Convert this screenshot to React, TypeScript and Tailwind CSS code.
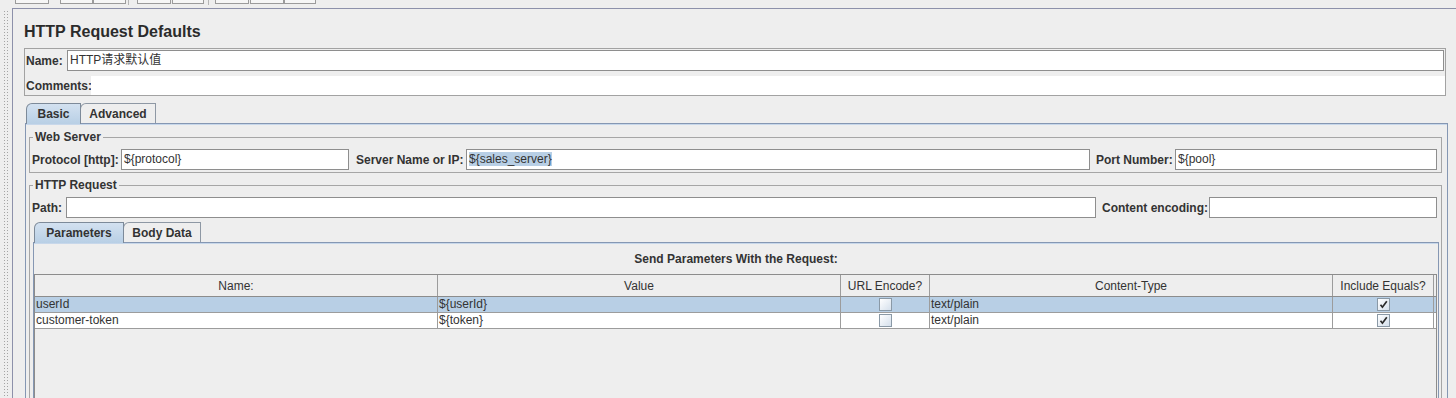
import React from "react";

function Field({
  className,
  children,
}: {
  className: string;
  children?: React.ReactNode;
}) {
  return (
    <div
      className={
        "h-[21px] border border-[#8e8e8e] bg-white pl-[2px] text-[12px] leading-[19px] text-[#333] whitespace-nowrap overflow-hidden " +
        className
      }
    >
      {children}
    </div>
  );
}

function Tab({
  label,
  selected,
  className,
}: {
  label: string;
  selected?: boolean;
  className: string;
}) {
  return (
    <div
      className={
        selected
          ? "relative z-10 -mb-px h-[21px] flex items-center justify-center rounded-tl-[6px] border-l border-t border-r border-[#7d8a99] bg-gradient-to-b from-[#d3e1f0] to-[#b8cfe5] text-[12px] font-bold text-[#333] " +
            className
          : "relative h-[20px] flex items-center justify-center rounded-tl-[6px] border-l border-t border-r border-[#8e98a4] bg-[#eeeeee] text-[12px] font-bold text-[#333] " +
            className
      }
    >
      {label}
    </div>
  );
}

function Check({ checked }: { checked?: boolean }) {
  return (
    <div className="w-[13px] h-[13px] border border-[#8a99a6] bg-gradient-to-br from-white to-[#d5e0ec] flex items-center justify-center">
      {checked && (
        <svg width="9" height="9" viewBox="0 0 9 9">
          <path
            d="M1.5 4.8 L3.4 7.2 L7.8 1.2"
            fill="none"
            stroke="#2a2a2a"
            strokeWidth="1.7"
          />
        </svg>
      )}
    </div>
  );
}

function Row({
  name,
  value,
  selected,
}: {
  name: string;
  value: string;
  selected?: boolean;
}) {
  return (
    <div
      className={
        selected
          ? "grid grid-cols-[403px_403px_89px_403px_101px] h-[16px] border-b border-[#9c9c9c] bg-[#b8cfe5] text-[12px] leading-[15px] text-[#333]"
          : "grid grid-cols-[403px_403px_89px_403px_101px] h-[16px] border-b border-[#9c9c9c] bg-white text-[12px] leading-[15px] text-[#333]"
      }
    >
      <div className="border-r border-[#9c9c9c] pl-[1px] whitespace-nowrap overflow-hidden">{name}</div>
      <div className="border-r border-[#9c9c9c] pl-[1px] whitespace-nowrap overflow-hidden">{value}</div>
      <div className="border-r border-[#9c9c9c] flex items-center justify-center">
        <Check />
      </div>
      <div className="border-r border-[#9c9c9c] pl-[1px]">text/plain</div>
      <div className="border-r border-[#9c9c9c] flex items-center justify-center">
        <Check checked />
      </div>
    </div>
  );
}

export default function App() {
  return (
    <div className="w-[1456px] h-[398px] overflow-hidden bg-[#eeeeee] font-['Liberation_Sans','Noto_Sans_CJK_SC',sans-serif] text-[#333] flex flex-col">
      {/* toolbar remnants */}
      <div className="h-[8px] shrink-0 flex items-start">
        <div className="ml-[15px] w-[34px] h-[4px] border-x border-b border-[#9b9b9b] bg-[#f6f6f6]" />
        <div className="ml-[11px] w-[33px] h-[4px] border-x border-b border-[#9b9b9b] bg-[#f6f6f6]" />
        <div className="w-[33px] h-[4px] border-x border-b border-[#9b9b9b] bg-[#f6f6f6]" />
        <div className="ml-[2px] w-px h-[5px] bg-[#b5b5b5]" />
        <div className="ml-[8px] w-[34px] h-[4px] border-x border-b border-[#9b9b9b] bg-[#f6f6f6]" />
        <div className="ml-[1px] w-[32px] h-[4px] border-x border-b border-[#9b9b9b] bg-[#f6f6f6]" />
        <div className="ml-[4px] w-px h-[5px] bg-[#b5b5b5]" />
        <div className="ml-[6px] w-[34px] h-[4px] border-x border-b border-[#9b9b9b] bg-[#f6f6f6]" />
        <div className="ml-[1px] w-[34px] h-[4px] border-x border-b border-[#9b9b9b] bg-[#f6f6f6]" />
        <div className="w-[32px] h-[4px] border-x border-b border-[#9b9b9b] bg-[#f6f6f6]" />
      </div>

      <div className="flex flex-1 min-h-0">
        {/* split pane divider */}
        <div className="w-[12px] shrink-0 flex pt-[2px]">
          <div className="ml-[3px] w-[7px] h-full bg-[radial-gradient(circle,#a4a4a4_0.7px,transparent_1px)] bg-[length:3px_3px]" />
        </div>

        {/* main panel */}
        <div className="flex-1 min-w-0 border-l border-t border-[#8d91aa] pl-[11px] pt-[13px] flex flex-col">
          <div className="text-[16px] leading-[19px] font-bold text-[#2b2b2b]">
            HTTP Request Defaults
          </div>

          {/* name / comments */}
          <div className="mt-[7px] mr-[10px] border border-[#a2a2a2] flex flex-col">
            <div className="mt-[1px] flex items-center h-[21px]">
              <span className="pl-[1px] w-[42px] shrink-0 font-bold text-[12px]">Name:</span>
              <Field className="flex-1 mr-[1px]">HTTP请求默认值</Field>
            </div>
            <div className="mt-[5px] flex items-center h-[19px]">
              <span className="pl-[1px] w-[66px] shrink-0 font-bold text-[12px]">Comments:</span>
              <div className="flex-1 h-full bg-white" />
            </div>
          </div>

          {/* Basic / Advanced tabs */}
          <div className="mt-[7px] ml-[2px] flex items-end h-[20px]">
            <Tab label="Basic" selected className="w-[55px]" />
            <Tab label="Advanced" className="-ml-px w-[76px]" />
          </div>
          <div className="ml-[1px] mr-[8px] flex-1 border border-[#8597b3] shadow-[inset_0_1px_0_#c7d7ea] pt-[6px] pl-[3px] pr-[5px]">
            {/* Web Server */}
            <fieldset className="border border-[#a6a6a6] pt-[5px] pb-[2px]">
              <legend className="ml-[3px] px-[2px] font-bold text-[12px] leading-[14px]">
                Web Server
              </legend>
              <div className="flex items-center h-[21px] pl-[2px] pr-[4px]">
                <span className="w-[89px] shrink-0 font-bold text-[12px] whitespace-nowrap">Protocol [http]:</span>
                <Field className="w-[228px] shrink-0">{"${protocol}"}</Field>
                <span className="ml-[7px] w-[110px] shrink-0 font-bold text-[12px] whitespace-nowrap">Server Name or IP:</span>
                <Field className="w-[624px] shrink-0">
                  <span className="bg-[#b8cfe5]">{"${sales_server}"}</span>
                </Field>
                <span className="ml-[6px] w-[79px] shrink-0 font-bold text-[12px] whitespace-nowrap">Port Number:</span>
                <Field className="flex-1">{"${pool}"}</Field>
              </div>
            </fieldset>

            {/* HTTP Request */}
            <fieldset className="mt-[5px] border border-[#a6a6a6] pt-[5px] h-[260px]">
              <legend className="ml-[3px] px-[2px] font-bold text-[12px] leading-[14px]">
                HTTP Request
              </legend>
              <div className="flex items-center h-[21px] pl-[2px] pr-[4px]">
                <span className="w-[34px] shrink-0 font-bold text-[12px]">Path:</span>
                <Field className="w-[1030px] shrink-0" />
                <span className="ml-[6px] w-[107px] shrink-0 font-bold text-[12px] whitespace-nowrap">Content encoding:</span>
                <Field className="flex-1" />
              </div>

              {/* Parameters / Body Data tabs */}
              <div className="mt-[4px] ml-[4px] flex items-end h-[20px]">
                <Tab label="Parameters" selected className="w-[90px]" />
                <Tab label="Body Data" className="-ml-px w-[78px]" />
              </div>
              <div className="ml-[3px] mr-[2px] h-[200px] border border-[#8597b3] shadow-[inset_0_1px_0_#c7d7ea] pt-[9px]">
                <div className="text-center font-bold text-[12px] leading-[14px]">
                  Send Parameters With the Request:
                </div>
                <div className="mt-[8px] mr-[1px] h-[160px] border-l border-t border-r border-[#8c8c8c]">
                  <div className="grid grid-cols-[403px_403px_89px_403px_101px] h-[22px] border-b border-[#8c8c8c] bg-[#eeeeee] text-[12px] text-[#333]">
                    <div className="border-r border-[#9c9c9c] flex items-center justify-center">Name:</div>
                    <div className="border-r border-[#9c9c9c] flex items-center justify-center">Value</div>
                    <div className="border-r border-[#9c9c9c] flex items-center justify-center whitespace-nowrap">URL Encode?</div>
                    <div className="border-r border-[#9c9c9c] flex items-center justify-center">Content-Type</div>
                    <div className="border-r border-[#9c9c9c] flex items-center justify-center whitespace-nowrap">Include Equals?</div>
                  </div>
                  <Row name="userId" value={"${userId}"} selected />
                  <Row name="customer-token" value={"${token}"} />
                </div>
              </div>
            </fieldset>
          </div>
        </div>
      </div>
    </div>
  );
}
